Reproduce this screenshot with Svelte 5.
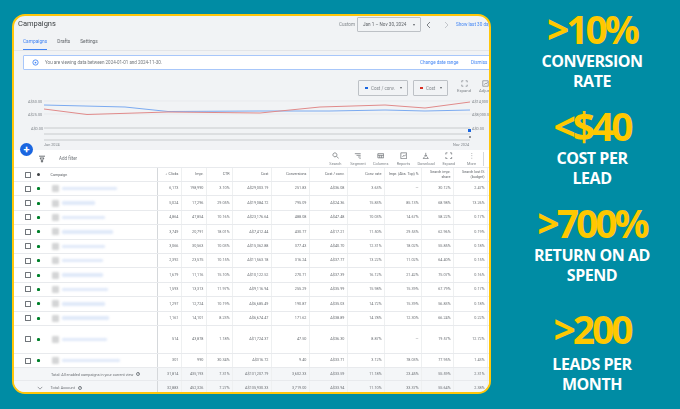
<script>
  const rows = [
    [55, 0, '6,173', '198,990', '3.10%', 'A$29,003.19', '251.83', 'A$36.08', '3.63%', '—', '30.12%', '2.47%'],
    [33, 0, '5,024', '17,296', '29.05%', 'A$19,084.72', '795.09', 'A$24.36', '15.83%', '85.13%', '68.98%', '13.26%'],
    [43, 0, '4,864', '47,854', '10.16%', 'A$23,176.64', '488.08', 'A$47.48', '10.03%', '14.67%', '58.22%', '0.17%'],
    [51, 0, '3,749', '20,791', '18.01%', 'A$7,412.44', '430.77', 'A$17.21', '11.50%', '29.53%', '62.96%', '0.19%'],
    [43, 0, '3,066', '30,563', '10.03%', 'A$15,362.88', '377.43', 'A$40.70', '12.31%', '18.02%', '55.85%', '0.18%'],
    [41, 0, '2,392', '23,575', '10.15%', 'A$11,563.18', '316.24', 'A$37.77', '13.22%', '11.02%', '64.40%', '0.15%'],
    [41, 0, '1,679', '11,116', '15.10%', 'A$10,122.52', '270.71', 'A$37.39', '16.12%', '21.42%', '75.07%', '0.16%'],
    [46, 0, '1,593', '13,313', '11.97%', 'A$9,116.94', '255.29', 'A$35.99', '15.98%', '15.39%', '67.79%', '0.17%'],
    [43, 0, '1,297', '12,724', '10.19%', 'A$6,685.49', '190.87', 'A$35.03', '14.72%', '15.39%', '56.83%', '0.18%'],
    [47, 0, '1,161', '14,101', '8.23%', 'A$6,674.47', '171.62', 'A$38.89', '14.78%', '12.30%', '66.24%', '0.22%'],
    [45, 1, '514', '43,878', '1.18%', 'A$1,724.37', '47.50', 'A$36.30', '8.87%', '—', '19.57%', '12.72%'],
    [58, 0, '301', '990', '30.34%', 'A$316.72', '9.40', 'A$33.71', '3.12%', '78.03%', '77.95%', '1.43%']
  ];
  const heads = ['Clicks', 'Impr.', 'CTR', 'Cost', 'Conversions', 'Cost / conv.', 'Conv. rate', 'Impr. (Abs. Top) %', 'Search impr. share', 'Search lost IS (budget)'];
  const totals = [
    ['Total: All enabled campaigns in your current view', '31,814', '435,193', '7.31%', 'A$131,207.79', '3,602.33', 'A$33.59', '11.18%', '23.45%', '55.59%', '2.31%'],
    ['Total: Account', '32,883', '452,326', '7.27%', 'A$135,930.33', '3,719.00', 'A$33.94', '11.10%', '33.37%', '55.64%', '2.38%']
  ];
  const tools = [
    ['Search', 'M3.500 1a2.400 2.400 0 1 0 .01 0M5.300 5 8 7.800'],
    ['Segment', 'M1 2h7M3 4h5M5 6h3M6.500 8h1.500'],
    ['Columns', 'M1 2h7v5H1zM1 4h7M3.300 4v3M5.600 4v3'],
    ['Reports', 'M1 1h7v7H1zM3 6l1.500-2 1 1L7 3'],
    ['Download', 'M4.500 1v4M3 3.600l1.500 1.600L6 3.600M1.500 8 3 5.500M7.500 8 6 5.500M1.500 8h6'],
    ['Expand', 'M1 3V1h2M6 1h2v2M8 6v2H6M3 8H1V6'],
    ['More', 'M4.500 1.200v.8M4.500 4.100v.8M4.500 7v.8']
  ];
  const stats = [
    ['>10%', ['CONVERSION', 'RATE']],
    ['<$40', ['COST PER', 'LEAD']],
    ['>700%', ['RETURN ON AD', 'SPEND']],
    ['>200', ['LEADS PER', 'MONTH']]
  ];
</script>

<div class="page">
  <main class="card">
    <div class="soft">
      <header class="top">
        <h1>Campaigns</h1>
        <div class="range">
          <span class="custom">Custom</span>
          <span class="picker">Jan 1 – Nov 30, 2024<i class="caret"></i></span>
          <svg class="nav" viewBox="0 0 30 8" aria-hidden="true"><path d="M5 1 2 4l3 3" stroke="#70757a"/><path d="M20 1l3 3-3 3" stroke="#bdc1c6"/></svg>
          <span class="link">Show last 30 days</span>
        </div>
      </header>

      <nav class="tabs">
        <span class="tab active">Campaigns</span>
        <span class="tab">Drafts</span>
        <span class="tab">Settings</span>
      </nav>

      <div class="banner">
        <svg viewBox="0 0 8 8" aria-hidden="true"><circle cx="4" cy="4" r="3" fill="none" stroke="#4285f4" stroke-width="1"/><circle cx="4" cy="4" r="1" fill="#4285f4"/></svg>
        <span class="msg">You are viewing data between 2024-01-01 and 2024-11-30.</span>
        <span class="link change">Change date range</span>
        <span class="link">Dismiss</span>
      </div>

      <div class="controls">
        <span class="select s1"><i class="mark blue"></i>Cost / conv.<i class="caret"></i></span>
        <span class="select s2"><i class="mark red"></i>Cost<i class="caret"></i></span>
        <span class="ctl">
          <svg viewBox="0 0 9 9" aria-hidden="true"><path d="M1 3V1h2M6 1h2v2M8 6v2H6M3 8H1V6" fill="none" stroke="#70757a" stroke-width=".8"/></svg>
          Expand
        </span>
        <span class="ctl">
          <svg viewBox="0 0 9 9" aria-hidden="true"><path d="M1 1h7v7H1zM3 6l1.500-2 1 1L7 3" fill="none" stroke="#70757a" stroke-width=".8"/></svg>
          Adjust
        </span>
      </div>

      <svg class="chart" viewBox="0 0 475 53" aria-hidden="true">
        <g fill="none">
          <path d="M30 4H475M30 17H475" stroke="#e3e5e8" stroke-width=".6"/>
          <path d="M30 31H456M30 37H456M30 43H456" stroke="#c4c7ca" stroke-width=".9"/>
          <path d="M30 8 111 10 154 14.500 246 14 316 14 371 13 411 14 456 13" stroke="#7baaf0" stroke-width="1"/>
          <path d="M30 12 73 17.500 154 15 246 16 306 10 371 8 411 11 456 5" stroke="#e08a8a" stroke-width="1"/>
        </g>
        <rect x="454" y="32" width="3" height="3" fill="#1a66e0"/>
        <circle cx="456" cy="40" r="1" fill="#70757a"/>
        <g class="axis">
          <text x="14" y="6">A$50.00</text>
          <text x="14" y="19">A$25.00</text>
          <text x="17" y="33">A$0.00</text>
          <text x="30" y="48.500">Jan 2024</text>
          <text x="439" y="48.500">Nov 2024</text>
          <text x="458" y="6">A$14,000</text>
          <text x="458" y="19">A$8,000.00</text>
          <text x="458" y="33">A$0.00</text>
        </g>
      </svg>

      <div class="toolbar">
        <svg class="filter" viewBox="0 0 8 8" aria-hidden="true"><path d="M1 1.200h6M2 3h4L4.600 5v2h-1.200V5z" fill="none" stroke="#5f6368" stroke-width=".9"/></svg>
        <span class="add">Add filter</span>
        <div class="tools">
          {#each tools as [label, d]}
            <span class="tool">
              <svg viewBox="0 0 9 9" aria-hidden="true"><path {d} fill="none" stroke="#5f6368" stroke-width=".8"/></svg>
              {label}
            </span>
          {/each}
        </div>
      </div>

      <div class="table">
        <div class="row head">
          <div class="first">
            <i class="box"></i><i class="dot dark"></i><span class="cname">Campaign</span>
          </div>
          {#each heads as h, i}
            <div class="num">{#if i === 0}<span class="arrow">↓</span>{/if}{h}</div>
          {/each}
        </div>

        {#each rows as r}
          <div class="row" class:tall={r[1] === 1}>
            <div class="first">
              <i class="box"></i><i class="dot"></i><i class="thumb"></i>
              <i class="name" style="width:{r[0]}px"></i>
            </div>
            {#each r.slice(2) as v}
              <div class="num">{v}</div>
            {/each}
          </div>
        {/each}

        {#each totals as t, ti}
          <div class="row total" class:last={ti === 1}>
            <div class="first">
              {#if ti === 1}<svg class="chev" viewBox="0 0 8 5" aria-hidden="true"><path d="M1 1l3 3 3-3" fill="none" stroke="#5f6368" stroke-width=".8"/></svg>{/if}
              <span class="tname">{t[0]}</span><i class="help">?</i>
            </div>
            {#each t.slice(1) as v}
              <div class="num">{v}</div>
            {/each}
          </div>
        {/each}
      </div>
    </div>

    <span class="fab">+</span>
  </main>

  <aside class="stats">
    {#each stats as [big, lines]}
      <section class="stat">
        <strong>{big}</strong>
        {#each lines as l}<span>{l}</span>{/each}
      </section>
    {/each}
  </aside>
</div>

<style>
  :global(body) { margin: 0; }
  .page {
    width: 680px; height: 409px; background: #008ca4; overflow: hidden;
    display: flex; box-sizing: border-box; padding: 14px 0 15px 12px;
    font-family: Roboto, "Liberation Sans", sans-serif; color: #5f6368;
  }
  .card {
    position: relative; width: 479px; height: 380px; box-sizing: border-box;
    background: #f1f3f5; border: 2px solid #ffc60a; border-radius: 13px;
    overflow: hidden; flex: none;
  }
  .soft { filter: blur(.25px); width: 475px; overflow: hidden; }
  .top { display: flex; height: 19px; padding-left: 4px; }
  h1 { margin: 0; flex: none; width: 321px; font-size: 7.500px; font-weight: 400; line-height: 16px; color: #3c4043; }
  .range { display: flex; flex: none; align-items: center; height: 15px; margin-top: 1px; font-size: 4.600px; white-space: nowrap; }
  .custom { width: 18px; color: #80868b; }
  .picker {
    display: flex; flex: none; align-items: center; justify-content: space-between; box-sizing: border-box;
    width: 64px; height: 15px; padding: 0 5px; border: .7px solid #bdc1c6; border-radius: 1px; color: #5f6368;
  }
  .caret { display: inline-block; flex: none; border: 1.500px solid transparent; border-top: 2px solid #5f6368; border-bottom: 0; }
  .nav { flex: none; width: 30px; height: 8px; margin: 0 1px 0 4px; fill: none; stroke-width: .9; }
  .link { color: #4285f4; white-space: nowrap; font-size: 4.600px; }
  .tabs {
    display: flex; gap: 10px; height: 16px; padding-left: 9px; box-sizing: border-box;
    border-bottom: .6px solid #e3e5e8; font-size: 4.800px; line-height: 14px; align-items: flex-start;
  }
  .tab { height: 15px; }
  .active { color: #4285f4; border-bottom: 1px solid #4285f4; box-sizing: border-box; }
  .banner {
    display: flex; align-items: center; box-sizing: border-box; height: 15px; margin: 4px -30px 0 9px;
    background: #fff; border: .7px solid #a8c7fa; border-radius: 1px; font-size: 4.500px; padding-left: 8px;
  }
  .banner svg { flex: none; width: 7px; height: 7px; margin-right: 6px; }
  .msg { flex: none; color: #70757a; width: 375px; white-space: nowrap; }
  .change { flex: none; width: 51px; }
  .controls { display: flex; align-items: flex-start; height: 17px; margin-top: 10px; padding-left: 344px; white-space: nowrap; font-size: 4.300px; color: #80868b; }
  .select {
    display: flex; flex: none; align-items: center; box-sizing: border-box; height: 16px; padding: 0 5px 0 6px;
    border: .7px solid #bdc1c6; border-radius: 1px; font-size: 4.500px; color: #80868b;
  }
  .select .caret { margin-left: auto; }
  .s1 { width: 50px; margin-right: 5px; }
  .s2 { width: 35px; margin-right: 5.500px; }
  .mark { width: 3px; height: 1.200px; margin-right: 3px; }
  .blue { background: #1a66e0; }
  .red { background: #d93025; }
  .ctl { display: flex; flex: none; flex-direction: column; align-items: center; width: 21px; line-height: 5px; }
  .ctl svg { width: 7px; height: 7px; margin-bottom: 1px; }
  .chart { display: block; width: 475px; height: 53px; }
  .axis { font-size: 3.800px; fill: #80868b; }
  .toolbar { display: flex; height: 18px; background: #fff; border-bottom: .6px solid #e8eaed; box-sizing: border-box; align-items: center; padding-left: 24px; }
  .filter { flex: none; width: 8px; height: 8px; }
  .add { flex: none; width: 30px; margin-left: 13px; font-size: 4.500px; color: #70757a; }
  .tools { display: flex; flex: none; margin-left: 235px; }
  .tool { display: flex; flex: none; flex-direction: column; align-items: center; width: 22.700px; font-size: 3.900px; line-height: 5px; color: #80868b; }
  .tool svg { width: 7.500px; height: 7.500px; margin-bottom: 1.500px; }
  .tool:last-child { border-right: .6px solid #d5d8db; }
  .table { background: #fff; font-size: 3.800px; color: #6c7075; }
  .row {
    display: grid; box-sizing: border-box; height: 14.400px; border-bottom: .6px solid #e8eaed;
    grid-template-columns: 144px 24px 25px 26px 39px 38px 38px 37px 37px 32px 34px;
  }
  .head { height: 14px; font-size: 3.700px; color: #5f6368; }
  .tall { height: 28px; }
  .first { display: flex; align-items: center; padding-left: 10.500px; border-right: .8px solid #d5d8db; }
  .box { width: 4px; height: 4px; border: .7px solid #70757a; border-radius: .5px; flex: none; }
  .dot { width: 3px; height: 3px; border-radius: 50%; background: #00802b; box-shadow: 0 0 .5px #00802b; margin-left: 6px; flex: none; }
  .dark { background: #3c4043; box-shadow: none; }
  .cname { margin-left: 11px; }
  .thumb { width: 7px; height: 7px; border-radius: 1px; background: #d4d5d6; margin-left: 12px; filter: blur(.8px); flex: none; }
  .name { height: 3.500px; margin-left: 3.500px; background: #e0e9f9; border-radius: 1px; filter: blur(.8px); }
  .num {
    display: flex; align-items: center; justify-content: flex-end; text-align: right; line-height: 4.500px;
    padding-right: 2.500px; border-right: .6px solid #eef0f1;
  }
  .arrow { margin-right: 1.500px; }
  .total { background: #f4f6f8; height: 13px; }
  .last { border-bottom: 0; }
  .tname { flex: none; margin-left: 26.500px; white-space: nowrap; }
  .chev { flex: none; width: 6px; height: 4px; margin-left: 12.500px; }
  .last .tname { margin-left: 7.500px; }
  .help { flex: none; box-sizing: border-box; width: 4px; height: 4px; margin-left: 3px; border: .5px solid #80868b; border-radius: 50%; font-size: 3px; font-style: normal; line-height: 3px; text-align: center; }
  .fab {
    position: absolute; left: 6px; top: 127px; width: 13px; height: 13px; border-radius: 50%;
    background: #1a66e0; color: #fff; font: 700 11px/13px Roboto, sans-serif; text-align: center;
  }
  .stats {
    display: flex; flex-direction: column; align-items: center; flex: none; width: 176px; margin-left: 13px; margin-top: -14px;
    font-family: "Open Sans", sans-serif; color: #fff;
  }
  .stat { display: flex; flex-direction: column; align-items: center; flex: none; height: 97px; }
  .stat:last-child { margin-top: 9px; }
  .stat strong { font-size: 39px; line-height: 40px; font-weight: 700; letter-spacing: -3px; color: #ffc800; margin: 9px 0 2px; }
  .stat:last-child strong { margin-bottom: 5px; }
  .stat span { font-size: 16px; line-height: 20px; font-weight: 700; letter-spacing: -.45px; }
</style>
